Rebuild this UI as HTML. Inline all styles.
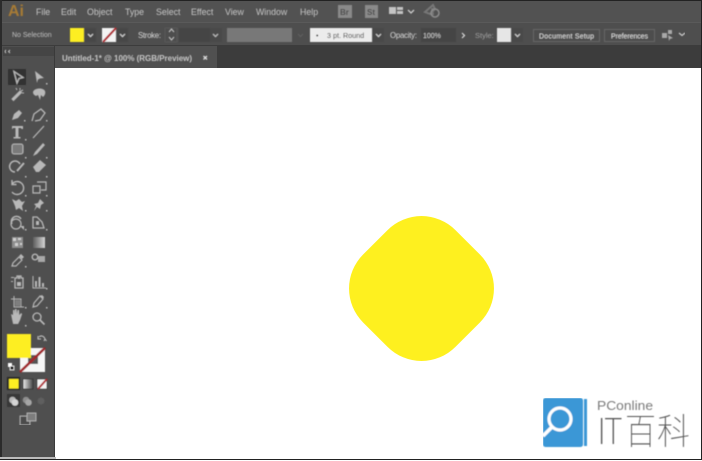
<!DOCTYPE html>
<html><head><meta charset="utf-8">
<style>
html,body{margin:0;padding:0;background:#fff;width:702px;height:461px;overflow:hidden}
svg{display:block;position:absolute;left:0;top:0}
text{font-family:"Liberation Sans",sans-serif}
</style></head>
<body>
<svg width="702" height="461" viewBox="0 0 702 461" xmlns="http://www.w3.org/2000/svg">
<rect width="702" height="461" fill="#fff"/>
<!-- chrome -->
<rect x="0" y="0" width="702" height="22" fill="#525252"/>
<rect x="0" y="22" width="702" height="24" fill="#4e4e4e"/>
<rect x="0" y="22" width="702" height="1" fill="#5a5a5a"/>
<rect x="0" y="45" width="702" height="23" fill="#3c3c3c"/>
<rect x="55" y="46" width="162" height="22" fill="#505050"/>
<rect x="0" y="46" width="55" height="411" fill="#4f4f4f"/>
<rect x="3" y="47" width="52" height="9" fill="#454545"/>
<rect x="0" y="0" width="702" height="1" fill="#222"/>
<rect x="0" y="0" width="2" height="459" fill="#2b2b2b"/>
<rect x="54" y="46" width="1" height="411" fill="#3a3a3a"/>
<rect x="0" y="457" width="56" height="2" fill="#bcbcbc"/>
<rect x="0" y="459" width="702" height="1" fill="#222"/>
<rect x="701" y="0" width="1" height="460" fill="#222"/>

<g filter="url(#soft)">
<text x="8" y="16" font-size="16" font-weight="bold" fill="#a67a35">Ai</text>
<g font-size="8.800" fill="#c6c6c6">
<text x="36" y="15">File</text><text x="61" y="15">Edit</text><text x="87" y="15">Object</text><text x="125" y="15">Type</text><text x="156" y="15">Select</text><text x="191" y="15">Effect</text><text x="225" y="15">View</text><text x="256" y="15">Window</text><text x="300" y="15">Help</text>
</g>
<rect x="338" y="5" width="14" height="13" fill="#8a8a8a"/><text x="340" y="15" font-size="8" font-weight="bold" fill="#4c4c4c">Br</text>
<rect x="365" y="5" width="13" height="13" fill="#8a8a8a"/><text x="367" y="15" font-size="8" font-weight="bold" fill="#4c4c4c">St</text>
<path d="M389 7h7v7h-7zM397 7h6v3h-6zM397 11h6v3h-6z" fill="#c4c4c4"/>
<path d="M408 10l3 3 3-3" fill="none" stroke="#ccc" stroke-width="1.300"/>
<path d="M425 12l8-7 2 4-5 5zM432 8l1 7" fill="none" stroke="#777" stroke-width="2"/>
<circle cx="435" cy="13" r="4" fill="none" stroke="#8c8c8c" stroke-width="1.500"/>

<!-- control bar -->
<text x="12" y="37" font-size="7" fill="#c0c0c0">No Selection</text>
<rect x="70" y="28" width="14" height="14" fill="#fdee21"/>
<rect x="85" y="28" width="11" height="14" fill="#474747"/>
<path d="M88 34l2.500 2.500 2.500-2.500" fill="none" stroke="#ccc" stroke-width="1.200"/>
<rect x="102" y="28" width="14" height="14" fill="#f3f3f3"/>
<path d="M103 42l13-14" stroke="#b02a30" stroke-width="2.200"/>
<rect x="117" y="28" width="11" height="14" fill="#474747"/>
<path d="M120 34l2.500 2.500 2.500-2.500" fill="none" stroke="#ccc" stroke-width="1.200"/>
<text x="138" y="38" font-size="7.800" fill="#d8d8d8" textLength="23">Stroke:</text>
<path d="M169 32l2.500-3 2.500 3M169 37l2.500 3 2.500-3" fill="none" stroke="#c8c8c8" stroke-width="1"/>
<rect x="165" y="28" width="12" height="14" fill="none" stroke="#5e5e5e" stroke-width=".6"/>
<rect x="179" y="28" width="31" height="14" fill="#454545"/>
<rect x="210" y="28" width="12" height="14" fill="#4a4a4a"/>
<path d="M213 34l2.500 2.500 2.500-2.500" fill="none" stroke="#bbb" stroke-width="1.200"/>
<rect x="227" y="28" width="65" height="14" fill="#787878"/>
<path d="M298 34l2.500 2.500 2.500-2.500" fill="none" stroke="#5f5f5f" stroke-width="1.200"/>
<rect x="310" y="28" width="62" height="14" fill="#ececec"/>
<text x="316" y="38" font-size="7" fill="#333">•</text>
<text x="327" y="38" font-size="7.200" fill="#333">3 pt. Round</text>
<rect x="373" y="28" width="11" height="14" fill="#484848"/>
<path d="M376 34l2.500 2.500 2.500-2.500" fill="none" stroke="#ccc" stroke-width="1.200"/>
<text x="390" y="38" font-size="7.800" fill="#d8d8d8" textLength="27">Opacity:</text>
<rect x="421" y="28" width="35" height="14" fill="#454545"/>
<text x="423" y="38" font-size="7" fill="#d0d0d0">100%</text>
<path d="M462 33l2.500 2.500-2.500 2.500" fill="none" stroke="#ddd" stroke-width="1.200"/>
<text x="475" y="38" font-size="7.500" fill="#a0a0a0">Style:</text>
<rect x="497" y="28" width="14" height="14" fill="#e6e6e6"/>
<rect x="512" y="28" width="11" height="14" fill="#484848"/>
<path d="M515 34l2.500 2.500 2.500-2.500" fill="none" stroke="#ccc" stroke-width="1.200"/>
<rect x="533.500" y="29.500" width="66" height="12" fill="#4e4e4e" stroke="#666"/>
<text x="539" y="38.500" font-size="7" fill="#e0e0e0" textLength="55">Document Setup</text>
<rect x="604.500" y="29.500" width="50" height="12" fill="#4e4e4e" stroke="#666"/>
<text x="611" y="38.500" font-size="7" fill="#e0e0e0" textLength="37">Preferences</text>
<path d="M662 33h5v5h-5zM668 30h4v4h-4zM668 35l5 3-3 1-1 2z" fill="#a8a8a8"/>
<path d="M679 33l3 2.500 3-2.500" fill="none" stroke="#ccc" stroke-width="1.200"/>

<!-- tab -->
<text x="62" y="61" font-size="8" font-weight="bold" fill="#c8c8c8" textLength="130" lengthAdjust="spacingAndGlyphs">Untitled-1* @ 100% (RGB/Preview)</text>
<path d="M203.500 56l3.500 3.500M207 56l-3.500 3.500" stroke="#ddd" stroke-width="1.300"/>
<path d="M6 50l-1.500 1.500 1.500 1.500M10 50l-1.500 1.500 1.500 1.500" fill="none" stroke="#ccc" stroke-width=".9"/>

<!-- toolbar -->
<rect x="8" y="69" width="18" height="16" fill="#333"/>
<g fill="#b8b8b8" stroke="none">
<path d="M14 71.500l9 6-4 1-2 4.500z" fill="none" stroke="#b8b8b8" stroke-width="1.300"/>
<path d="M35 71l9 7-4 .5-2 1 -1 3.500z"/>
<path d="M12 99l8-8 1.500 1.500-8 8zM20 88v2M23 90l-2 1M24 93h-2M16 88l1 2" stroke="#b8b8b8" stroke-width="1"/>
<path d="M33 92c1-4 10-5 12-1 1 3-1 5-2 6l-2-2-1 5-2-5-2 1c-2-1-3-2-3-4z"/>
<path d="M12 120l2-6 5-4 3 3-4 5z"/><path d="M32 121l2-7 7-5 4 4-5 7-5 1" fill="none" stroke="#b8b8b8" stroke-width="1.300"/>
<path d="M12 126h11v3h-1.500l-.5-1h-2.500v9h2v1.500h-7V137h2v-9H13l-.5 1H12z"/>
<path d="M33 138l11-12" stroke="#b8b8b8" stroke-width="1.200"/>
<rect x="12" y="144" width="11" height="10" rx="2" fill="#7a7a7a" stroke="#b8b8b8" stroke-width="1.100"/>
<path d="M33 156l2-4 8-9 2 2-8 9z"/>
<path d="M15 172a5.500 5.500 0 1 1 5-8" fill="none" stroke="#b8b8b8" stroke-width="1.500"/><path d="M17 171l7-8" stroke="#b8b8b8" stroke-width="2"/>
<path d="M33 167l7-7 6 5-7 7h-3z"/>
<path d="M12 184a6.500 6.500 0 1 1 0 8M12 180v4.500h4.500" fill="none" stroke="#b8b8b8" stroke-width="1.400"/>
<path d="M33 186h7v7h-7zM37 182h9v8h-5" fill="none" stroke="#b8b8b8" stroke-width="1.200"/>
<path d="M12 199l4 2 3-2 3 3 3-1-3 5 1 5-4-3-3 2-1-4z"/>
<path d="M40 199l4 4-3 2-1 4-3-2-3 4 2-5-2-2 4-1z"/>
<path d="M12 224a5 5 0 0 1 9-5" fill="none" stroke="#b8b8b8" stroke-width="1.500"/><circle cx="16" cy="224" r="5" fill="none" stroke="#b8b8b8" stroke-width="1.200"/><path d="M20 226l4 4v-4z"/>
<path d="M33 217v11h11l-2-6-5-5z" fill="none" stroke="#b8b8b8" stroke-width="1.300"/><path d="M36 221h3v4h-3z"/>
<rect x="12" y="237" width="11" height="11" fill="#8d8d8d"/>
<path d="M13 238h3v3h-3zM18 238h3v2h-3zM15 243h3v3h-3zM20 243h2v2h-2z" fill="#d0d0d0"/>
<rect x="33" y="237" width="12" height="11" fill="url(#tg)"/>
<path d="M12 266l1-3 6-6 3 3-6 6z" fill="none" stroke="#b8b8b8" stroke-width="1.200"/><path d="M19 256l2-2 3 3-2 2z"/>
<circle cx="35" cy="257" r="2.800" fill="none" stroke="#b8b8b8" stroke-width="1.400"/><rect x="38" y="256" width="7" height="6" fill="#a8a8a8"/>
<path d="M17 276h4v2h2v10h-8v-10h2z" fill="none" stroke="#b8b8b8" stroke-width="1.300"/><path d="M18 276h2v3h-2zM17 282h4v4h-4z"/><path d="M11 277h3v1h-3zM11 281h2v1h-2z"/>
<path d="M33 276v12h13" fill="none" stroke="#b8b8b8" stroke-width="1"/><rect x="35" y="281" width="2" height="6"/><rect x="38.500" y="277" width="2" height="10"/><rect x="42" y="283" width="2" height="4"/>
<path d="M14 296v11h10M11 299h10v8" fill="none" stroke="#b8b8b8" stroke-width="1"/><rect x="15" y="300" width="6" height="6" fill="#7e7e7e"/>
<path d="M33 307l1-4 6-7 3 3-6 7z" fill="none" stroke="#b8b8b8" stroke-width="1.200"/><path d="M40 296l2-1 2 2-1 2z"/>
<path d="M12 319l-1-5 2 1v-5h1.500v4l.5-5h1.500l.5 5 .5-4h1.500l.3 5 1.800-2 1 1-2 6-2 4h-5z"/>
<circle cx="37" cy="317" r="4" fill="none" stroke="#b8b8b8" stroke-width="1.300"/><path d="M40 320l4.500 4.500" stroke="#b8b8b8" stroke-width="1.700"/>
</g>
<g fill="#bdbdbd">
<rect x="24" y="120" width="1.500" height="1.500"/><rect x="46" y="83" width="1.500" height="1.500"/><rect x="46" y="120" width="1.500" height="1.500"/><rect x="25" y="139" width="1.500" height="1.500"/><rect x="25" y="157" width="1.500" height="1.500"/><rect x="46" y="157" width="1.500" height="1.500"/><rect x="25" y="176" width="1.500" height="1.500"/><rect x="46" y="176" width="1.500" height="1.500"/><rect x="25" y="195" width="1.500" height="1.500"/><rect x="46" y="195" width="1.500" height="1.500"/><rect x="25" y="210" width="1.500" height="1.500"/><rect x="46" y="210" width="1.500" height="1.500"/><rect x="25" y="229" width="1.500" height="1.500"/><rect x="46" y="229" width="1.500" height="1.500"/><rect x="25" y="266" width="1.500" height="1.500"/><rect x="46" y="288" width="1.500" height="1.500"/><rect x="25" y="307" width="1.500" height="1.500"/><rect x="46" y="307" width="1.500" height="1.500"/><rect x="25" y="325" width="1.500" height="1.500"/>
</g>

<!-- colors -->
<rect x="20" y="348" width="25" height="24" fill="#f6f6f6"/>
<rect x="28" y="355" width="10" height="9" fill="#555"/>
<path d="M20 372l25-24" stroke="#a3262c" stroke-width="2.600"/>
<rect x="7" y="334" width="24" height="24" fill="#fdee21"/>
<path d="M39 337c2-2 5-1 6 2M38 336v3h3M44 341l1-2 1.500 2" fill="none" stroke="#c4c4c4" stroke-width="1"/>
<rect x="8" y="363" width="4" height="4" fill="#fff"/><rect x="10" y="366" width="4" height="4" fill="#111" stroke="#fff" stroke-width=".8"/>
<rect x="7" y="377" width="13" height="13" fill="#2c2c2c"/><rect x="9" y="379" width="9.500" height="9.500" fill="#fdee21"/>
<rect x="23" y="379" width="10" height="10" fill="url(#tg2)" stroke="#333" stroke-width=".8"/>
<rect x="37" y="379" width="10" height="10" fill="#f3f3f3" stroke="#333" stroke-width=".8"/><path d="M38 389l9-10" stroke="#b02a30" stroke-width="2"/>
<rect x="7" y="394" width="13" height="13" fill="#383838"/>
<circle cx="12.500" cy="400" r="3.300" fill="#b8b8b8"/><circle cx="15" cy="402.500" r="3.300" fill="#d4d4d4"/>
<circle cx="26" cy="400" r="3.300" fill="#8e8e8e"/><circle cx="28.500" cy="402.500" r="3.300" fill="#a6a6a6"/>
<circle cx="41" cy="401" r="3.500" fill="#5f5f5f"/>
<rect x="20" y="416" width="10" height="9" fill="#4c4c4c" stroke="#b8b8b8" stroke-width=".9"/>
<rect x="27" y="413" width="9" height="8" fill="#7d7d7d" stroke="#b8b8b8" stroke-width=".9"/>
</g>

<!-- artwork -->
<rect x="356.200" y="223.200" width="130.600" height="130.600" rx="48" ry="48" fill="#fef01f" transform="rotate(45 421.500 288.500)"/>

<!-- logo -->
<g filter="url(#soft)">
<rect x="543" y="398" width="40" height="49" rx="2.500" fill="#3a97d6"/>
<rect x="584" y="399" width="3" height="47" fill="#3a97d6"/>
<circle cx="560" cy="419" r="11" fill="none" stroke="#fff" stroke-width="3.200"/>
<path d="M552 427l-9 9" stroke="#fff" stroke-width="3.600"/>
<text x="597" y="410" font-size="13" fill="#7a7a7a" textLength="56" lengthAdjust="spacingAndGlyphs">PConline</text>
<g fill="#4f4f4f" font-weight="100" style="font-size:36px">
<text transform="translate(597 444)" style="font-family:'Noto Sans CJK SC',sans-serif">I</text>
<text transform="translate(604 444) scale(.9 1)" style="font-family:'Noto Sans CJK SC',sans-serif">T</text>
<text x="625" y="444" textLength="31" lengthAdjust="spacingAndGlyphs" style="font-family:'Noto Sans CJK SC',sans-serif">百</text>
<text x="657" y="444" textLength="33" lengthAdjust="spacingAndGlyphs" style="font-family:'Noto Sans CJK SC',sans-serif">科</text>
</g>
</g>

<defs>
<linearGradient id="tg" x1="0" x2="1" y1="0" y2="0"><stop offset="0" stop-color="#5c5c5c"/><stop offset="1" stop-color="#d6d6d6"/></linearGradient>
<linearGradient id="tg2" x1="0" x2="1" y1="0" y2="0"><stop offset="0" stop-color="#ededed"/><stop offset="1" stop-color="#444"/></linearGradient>
<filter id="soft" x="0" y="0" width="100%" height="100%"><feGaussianBlur stdDeviation="0.450"/></filter>
</defs>
</svg>
</body></html>
